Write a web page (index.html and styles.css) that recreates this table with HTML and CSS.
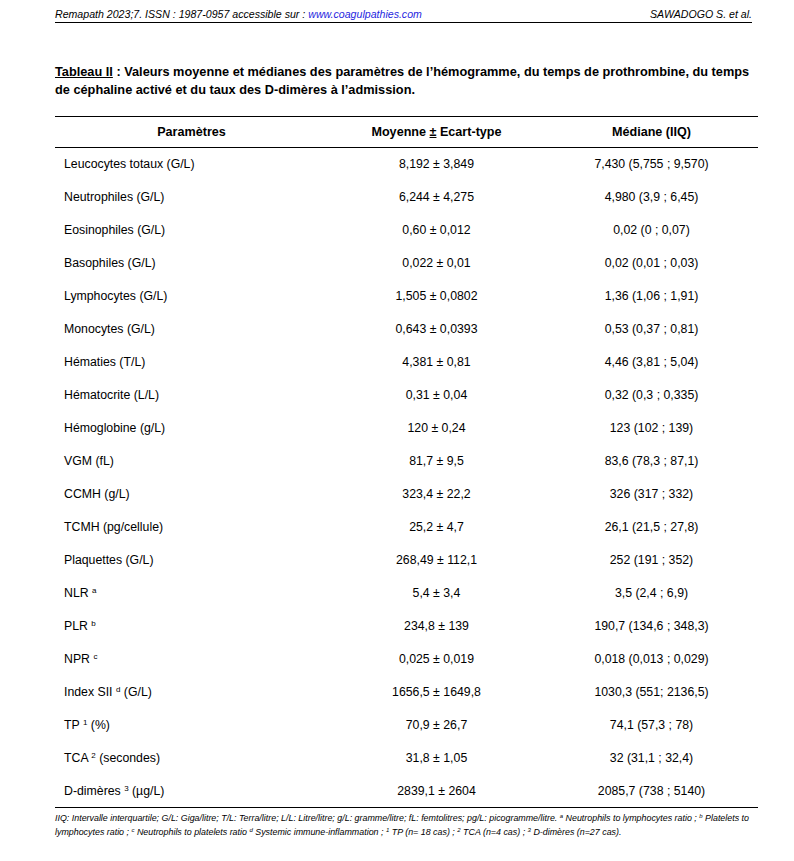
FILE: index.html
```html
<!doctype html>
<html lang="fr">

<head>
    <meta charset="UTF-8" />
    <meta name="viewport" content="width=device-width, initial-scale=1.0" />
    <title>Tableau II</title>
    <link rel="stylesheet" href="styles.css">
</head>

<body>
    <div class="page">
        <div class="running-head">
            <span>Remapath 2023;7. ISSN : 1987-0957 accessible sur : <a href="#">www.coagulpathies.com</a></span>
            <span>SAWADOGO S. et al.</span>
        </div>

        <p class="caption">
            <u>Tableau II</u> : Valeurs moyenne et médianes des paramètres de l’hémogramme, du temps de prothrombine, du temps<br>
            de céphaline activé et du taux des D-dimères à l’admission.
        </p>

        <table class="results">
            <thead>
                <tr>
                    <th>Paramètres</th>
                    <th>Moyenne <span class="pm">±</span> Ecart-type</th>
                    <th>Médiane (IIQ)</th>
                </tr>
            </thead>
            <tbody>
                <tr><td>Leucocytes totaux (G/L)</td><td>8,192 ± 3,849</td><td>7,430 (5,755 ; 9,570)</td></tr>
                <tr><td>Neutrophiles (G/L)</td><td>6,244 ± 4,275</td><td>4,980 (3,9 ; 6,45)</td></tr>
                <tr><td>Eosinophiles (G/L)</td><td>0,60 ± 0,012</td><td>0,02 (0 ; 0,07)</td></tr>
                <tr><td>Basophiles (G/L)</td><td>0,022 ± 0,01</td><td>0,02 (0,01 ; 0,03)</td></tr>
                <tr><td>Lymphocytes (G/L)</td><td>1,505 ± 0,0802</td><td>1,36 (1,06 ; 1,91)</td></tr>
                <tr><td>Monocytes (G/L)</td><td>0,643 ± 0,0393</td><td>0,53 (0,37 ; 0,81)</td></tr>
                <tr><td>Hématies (T/L)</td><td>4,381 ± 0,81</td><td>4,46 (3,81 ; 5,04)</td></tr>
                <tr><td>Hématocrite (L/L)</td><td>0,31 ± 0,04</td><td>0,32 (0,3 ; 0,335)</td></tr>
                <tr><td>Hémoglobine (g/L)</td><td>120 ± 0,24</td><td>123 (102 ; 139)</td></tr>
                <tr><td>VGM (fL)</td><td>81,7 ± 9,5</td><td>83,6 (78,3 ; 87,1)</td></tr>
                <tr><td>CCMH (g/L)</td><td>323,4 ± 22,2</td><td>326 (317 ; 332)</td></tr>
                <tr><td>TCMH (pg/cellule)</td><td>25,2 ± 4,7</td><td>26,1 (21,5 ; 27,8)</td></tr>
                <tr><td>Plaquettes (G/L)</td><td>268,49 ± 112,1</td><td>252 (191 ; 352)</td></tr>
                <tr><td>NLR <sup>a</sup></td><td>5,4 ± 3,4</td><td>3,5 (2,4 ; 6,9)</td></tr>
                <tr><td>PLR <sup>b</sup></td><td>234,8 ± 139</td><td>190,7 (134,6 ; 348,3)</td></tr>
                <tr><td>NPR <sup>c</sup></td><td>0,025 ± 0,019</td><td>0,018 (0,013 ; 0,029)</td></tr>
                <tr><td>Index SII <sup>d</sup> (G/L)</td><td>1656,5 ± 1649,8</td><td>1030,3 (551; 2136,5)</td></tr>
                <tr><td>TP <sup>1</sup> (%)</td><td>70,9 ± 26,7</td><td>74,1 (57,3 ; 78)</td></tr>
                <tr><td>TCA <sup>2</sup> (secondes)</td><td>31,8 ± 1,05</td><td>32 (31,1 ; 32,4)</td></tr>
                <tr><td>D-dimères <sup>3</sup> (µg/L)</td><td>2839,1 ± 2604</td><td>2085,7 (738 ; 5140)</td></tr>
            </tbody>
        </table>

        <p class="notes">
            IIQ: Intervalle interquartile; G/L: Giga/litre; T/L: Terra/litre; L/L: Litre/litre; g/L: gramme/litre; fL: femtolitres; pg/L: picogramme/litre. <sup>a</sup> Neutrophils to lymphocytes ratio ; <sup>b</sup> Platelets to<br>
            lymphocytes ratio ; <sup>c</sup> Neutrophils to platelets ratio <sup>d</sup> Systemic immune-inflammation ; <sup>1</sup> TP (n= 18 cas) ; <sup>2</sup> TCA (n=4 cas) ; <sup>3</sup> D-dimères (n=27 cas).
        </p>
    </div>
</body>

</html>
```

FILE: styles.css
```css
body {
    margin: 0;
    background: #fff;
    color: #000;
    font-family: "Liberation Sans", Arial, sans-serif;
}

.page {
    width: 703px;
    padding: 8px 0 0 55px;
}

.running-head {
    display: flex;
    justify-content: space-between;
    width: 697px;
    font-style: italic;
    font-size: 10.6px;
    line-height: 13px;
    border-bottom: 1px solid #000;
    padding-bottom: 1px;
}

.running-head a {
    color: #1f1fe0;
    text-decoration: none;
}

.caption {
    margin: 40px 0 0 0;
    font-weight: bold;
    font-size: 12.75px;
    line-height: 18px;
    white-space: nowrap;
}

.results {
    width: 703px;
    margin-top: 17px;
    border-collapse: collapse;
    font-size: 12.3px;
}

.results th {
    font-weight: bold;
    font-size: 12.6px;
    text-align: center;
    height: 30px;
    padding: 0;
    border-top: 1px solid #000;
    border-bottom: 1px solid #000;
}

.results th:nth-child(1) {
    width: 273px;
}

.results th:nth-child(2) {
    width: 217px;
}

.pm {
    text-decoration: underline;
}

.results td {
    height: 33px;
    padding: 0;
    text-align: center;
}

.results td:first-child {
    text-align: left;
    padding-left: 9px;
}

.results tbody tr:first-child td {
    height: 32px;
}

.results tbody tr:last-child td {
    border-bottom: 1px solid #000;
}

sup {
    font-size: 8px;
    vertical-align: 4px;
    line-height: 0;
}

.notes {
    margin: 3px 0 0 0;
    font-style: italic;
    font-size: 8.9px;
    line-height: 14px;
    white-space: nowrap;
}

.notes sup {
    font-size: 6px;
    vertical-align: 3px;
}
```
